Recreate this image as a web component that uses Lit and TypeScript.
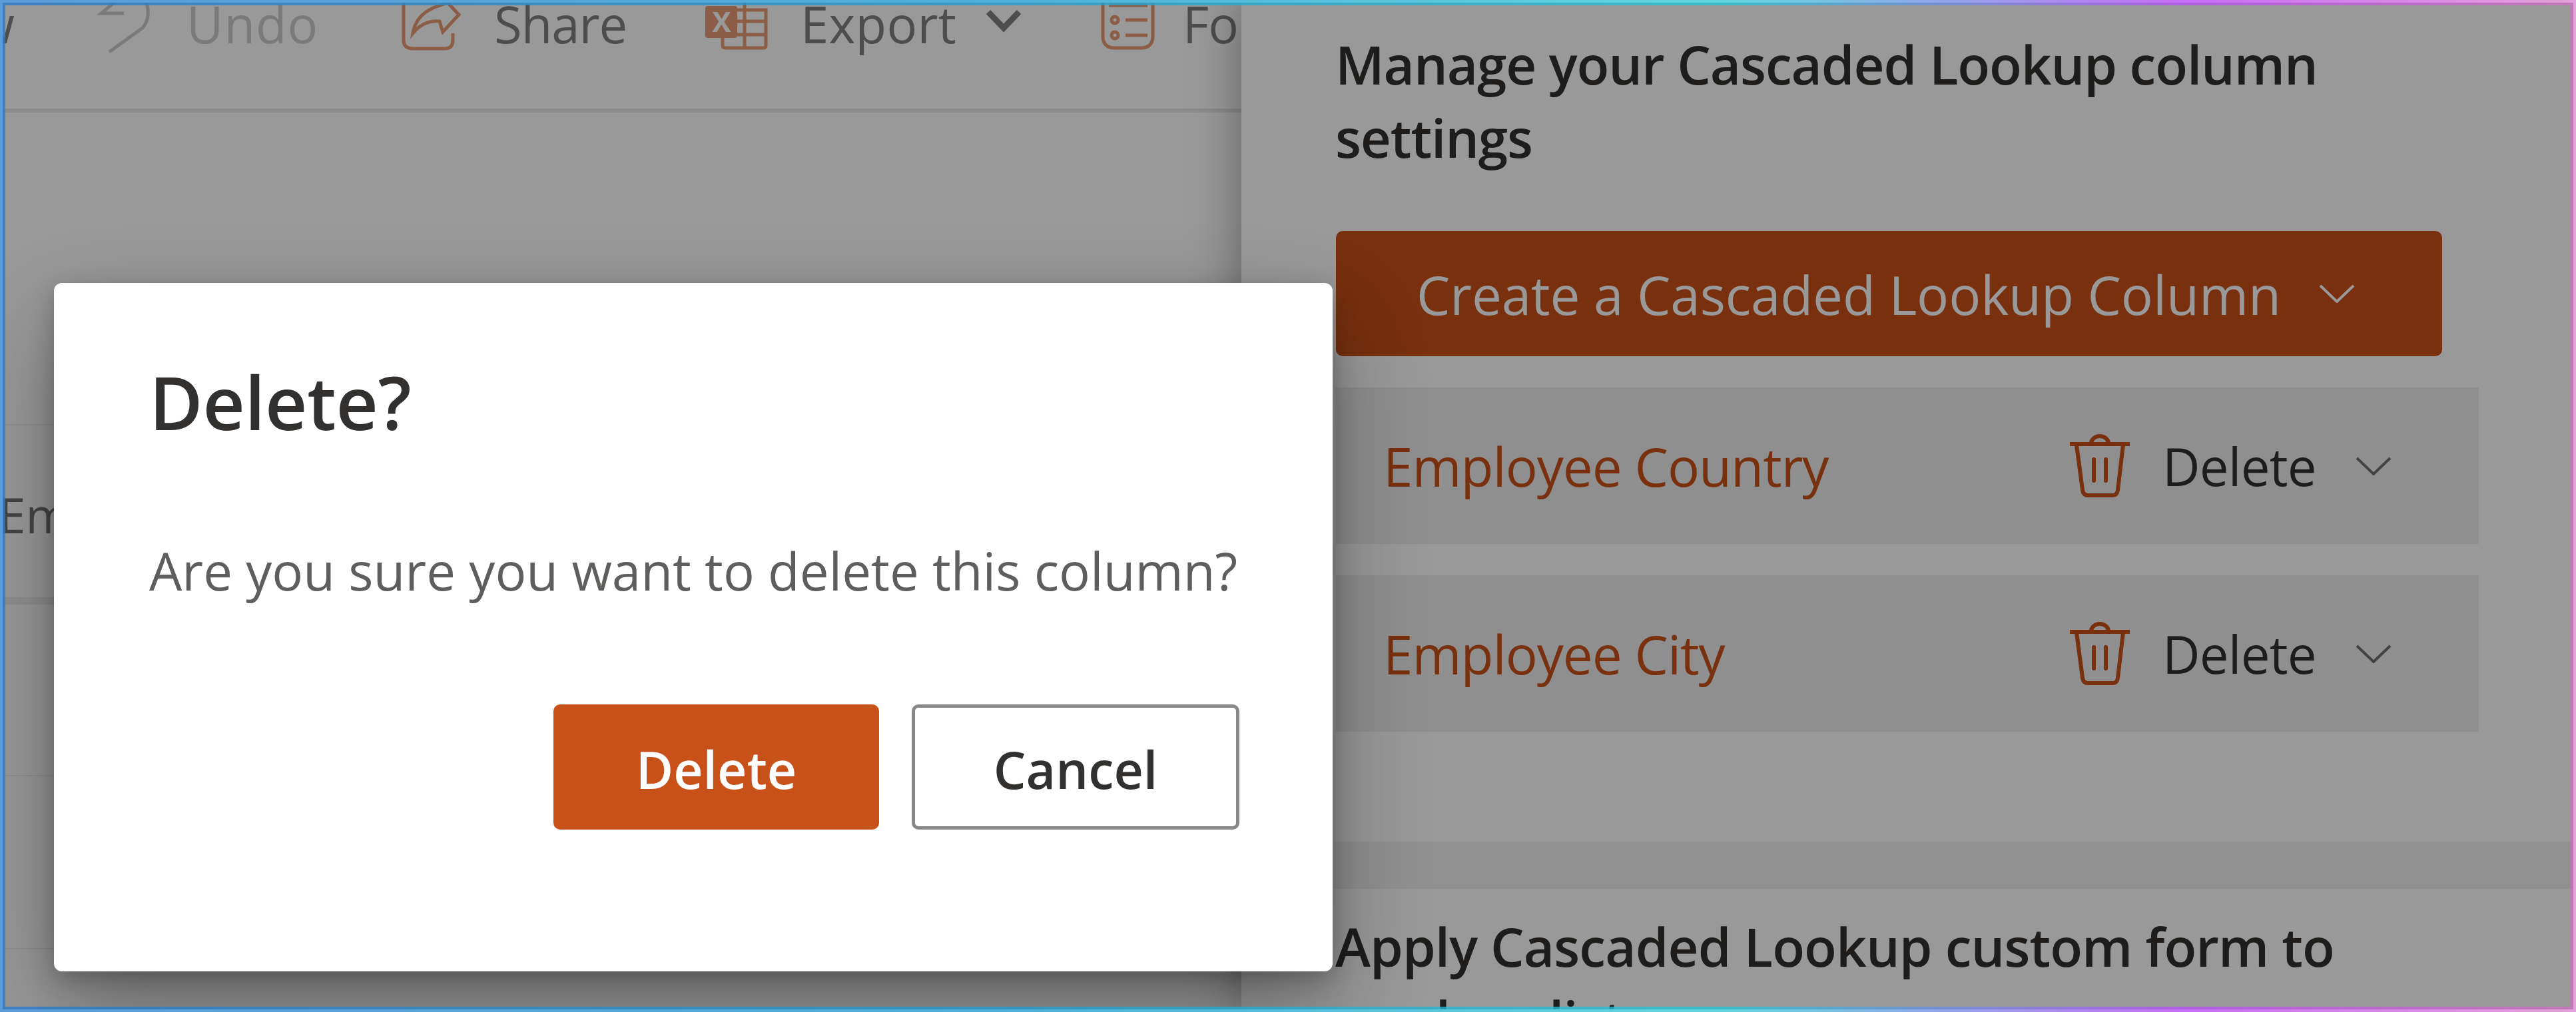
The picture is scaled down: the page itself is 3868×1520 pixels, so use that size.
import { LitElement, html, css } from "lit";
import { customElement } from "lit/decorators.js";

const chevron = (cls: string) => html`<svg class="chev ${cls}" viewBox="0 0 54 28"><path d="M2 2 L27 26 L52 2"/></svg>`;
const trash = html`<svg class="trash" viewBox="0 0 90 96"><path d="M1 15 H89"/><path d="M32 14 A13 11 0 0 1 58 14"/><path d="M10 16 L19 84 Q20 92 27 92 H65 Q71 92 72 84 L80 16"/><path d="M36 38 V70"/><path d="M54 38 V70"/></svg>`;

@customElement("app-root")
export class AppRoot extends LitElement {
  static styles = css`
    :host { display: block; position: relative; width: 3868px; height: 1520px; overflow: hidden; font-family: "Open Sans", "Liberation Sans", sans-serif; color: #323130; background: #fff; }
    .page { display: flex; height: 1520px; }
    .main { width: 1864px; flex: none; overflow: hidden; }
    .toolbar { display: grid; height: 163px; grid-template-columns: 21px 129px 130px 324px 138px 317px 143px 279px 172px 123px 100px; font-size: 76px; letter-spacing: -1px; line-height: 80px; color: #808080; white-space: nowrap; }
    .toolbar > * { margin-top: -4px; }
    .toolbar svg { margin-top: 0; display: block; height: 90px; overflow: visible; fill: none; stroke: #e89a76; stroke-width: 5; }
    .tail { justify-self: end; }
    .undo-t { color: #cbcbcb; letter-spacing: 1px; }
    .export-t { letter-spacing: 0.3px; }
    .toolbar .undo-i { stroke: #cbcbcb; }
    .toolbar .caret { stroke: #808080; stroke-width: 9; }
    .rule { height: 6px; background: #e8e8e8; }
    .spacer { height: 468px; }
    .list-row { height: 260px; border-top: 2px solid #f2f2f2; box-sizing: border-box; font-size: 73px; line-height: 73px; color: #747474; padding-top: 97px; text-indent: -2px; white-space: nowrap; }
    .list-row.thick { border-top: 11px solid #eeeeee; height: 267px; }
    .panel { flex: 1; position: relative; background: #fff; box-shadow: 0 0 70px rgba(0,0,0,.38); padding: 41px 0 0 141px; box-sizing: border-box; overflow: hidden; }
    .head { font-size: 80px; line-height: 110px; font-weight: 600; letter-spacing: -1.1px; margin: 0; color: #323130; white-space: pre-line; }
    .head.apply { margin-top: 31px; letter-spacing: -0.9px; }
    .create { display: grid; grid-template-columns: 1355px auto; align-items: center; width: 1661px; height: 188px; margin: 86px 0 0 1px; box-sizing: border-box; padding-left: 121px; background: #c85019; color: #fff; border-radius: 10px; font-size: 80px; font-weight: 500; letter-spacing: -0.1px; white-space: nowrap; }
    .row { display: grid; grid-template-columns: 1031px 139px 290px auto; align-items: center; width: 1717px; height: 235px; margin-top: 47px; box-sizing: border-box; padding-left: 72px; background: #efefef; font-size: 80px; white-space: nowrap; }
    .row .name { color: #c85019; letter-spacing: -1px; }
    .row .act { font-size: 78px; letter-spacing: -0.8px; }
    .chev { display: block; width: 54px; height: 28px; fill: none; stroke: #6e6e6e; stroke-width: 4; }
    .chev.light { stroke: #fff; }
    .trash { display: block; width: 90px; height: 96px; fill: none; stroke: #c85019; stroke-width: 6; stroke-linecap: round; }
    .band { height: 71px; margin: 165px 0 0 -141px; background: #f0f0f0; }
    .mask { position: absolute; inset: 0; background: rgba(0,0,0,.4); }
    .dialog { position: absolute; left: 81px; top: 425px; width: 1920px; height: 1034px; box-sizing: border-box; padding: 113px 140px 0 143px; background: #fff; border-radius: 12px; box-shadow: 0 61px 138px rgba(0,0,0,.32), 0 11px 35px rgba(0,0,0,.24); }
    h2 { margin: 0; font-size: 110px; line-height: 130px; font-weight: 600; letter-spacing: -0.2px; }
    .body { margin: 134px 0 0; font-size: 78px; line-height: 110px; color: #605e5c; white-space: nowrap; }
    .actions { display: flex; justify-content: flex-end; gap: 49px; margin-top: 146px; }
    .btn { width: 489px; height: 188px; box-sizing: border-box; display: flex; align-items: center; justify-content: center; padding-top: 6px; border-radius: 10px; font-size: 77px; font-weight: 600; }
    .btn.primary { background: #c85019; color: #fff; }
    .btn.ghost { width: 492px; border: 5px solid #8a8886; color: #323130; }
    .frame, .frame2 { position: absolute; pointer-events: none; box-sizing: border-box; border: 4px solid; }
    .frame { inset: 0; border-image: linear-gradient(90deg, #5b9bd8 0, #4fb0d8 40%, #62d6de 67%, #c86ef6 85%, #e3a0d8 100%) 1; }
    .frame2 { inset: 4px; border-image: linear-gradient(90deg, rgba(40,122,202,.8) 0, rgba(34,157,207,.8) 40%, rgba(38,198,212,.8) 67%, rgba(184,80,242,.8) 85%, rgba(204,112,192,.8) 100%) 1; }
  `;
  render() {
    return html`
      <div class="page">
        <div class="main">
          <div class="toolbar">
            <span class="tail">w</span><span></span>
            <svg class="undo-i" width="85" viewBox="150 0 85 90"><path d="M176 0 L152 20 H186"/><path d="M196 -8 Q222 -4 222 14 Q224 30 214 42 L164 78"/></svg>
            <span class="undo-t">Undo</span>
            <svg width="88" viewBox="604 0 88 90"><path d="M606 4 V60 Q606 73 620 73 H668 Q680 73 680 60 V50"/><path d="M620 50 Q624 24 650 12 L672 4 L689 22 L665 48 L660 32 Q636 30 620 50 Z"/></svg>
            <span>Share</span>
            <svg width="96" viewBox="1059 0 96 90"><rect x="1059" y="9" width="48" height="48" rx="4" fill="#e89a76" stroke="none"/><text x="1083" y="48" text-anchor="middle" font-size="42" font-weight="700" fill="#fff" stroke="none">X</text><path d="M1107 15 H1150 V68 Q1150 72 1146 72 H1090 Q1085 72 1085 68 V57 M1107 32 H1150 M1107 52 H1150 M1118 4 V72"/></svg>
            <span class="export-t">Export</span>
            <svg class="caret" width="54" viewBox="1481 0 54 90"><path d="M1484 18 L1507 42 L1530 18"/></svg>
            <svg width="84" viewBox="1653 0 84 90"><path d="M1656 -10 V54 Q1656 72 1674 72 H1713 Q1731 72 1731 54 V-10 M1665 8 H1723 M1690 30 H1723 M1690 53 H1723"/><circle cx="1674" cy="30" r="5"/><circle cx="1674" cy="53" r="5"/></svg>
            <span>Form</span>
          </div>
          <div class="rule"></div>
          <div class="spacer"></div>
          <div class="list-row">Employee</div>
          <div class="list-row thick"></div>
          <div class="list-row"></div>
          <div class="list-row"></div>
        </div>
        <div class="panel">
          <p class="head">Manage your Cascaded Lookup column
settings</p>
          <div class="create"><span>Create a Cascaded Lookup Column</span>${chevron("light")}</div>
          <div class="row"><span class="name">Employee Country</span>${trash}<span class="act">Delete</span>${chevron("")}</div>
          <div class="row"><span class="name">Employee City</span>${trash}<span class="act">Delete</span>${chevron("")}</div>
          <div class="band"></div>
          <p class="head apply">Apply Cascaded Lookup custom form to
modern lists</p>
        </div>
      </div>
      <div class="mask"></div>
      <div class="dialog">
        <h2>Delete?</h2>
        <p class="body">Are you sure you want to delete this column?</p>
        <div class="actions"><div class="btn primary">Delete</div><div class="btn ghost">Cancel</div></div>
      </div>
      <div class="frame"></div>
      <div class="frame2"></div>
    `;
  }
}
